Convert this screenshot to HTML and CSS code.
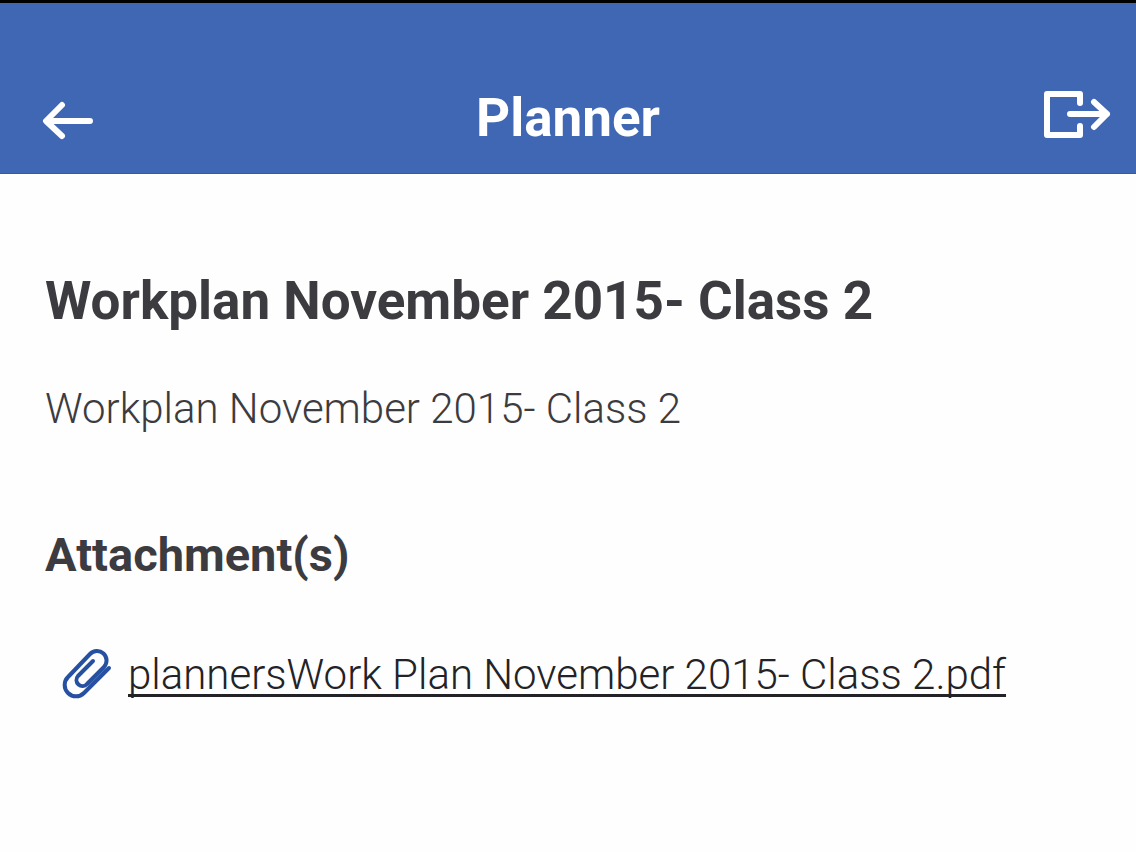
FILE: index.html
```
<!DOCTYPE html>
<html lang="en">
<head>
    <meta charset="UTF-8">
    <meta name="viewport" content="width=device-width, initial-scale=1.0">
    <title>Planner</title>
    <link rel="stylesheet" href="styles.css">
</head>
<body>
    <header class="topbar">
        <button type="button" class="icon-button back" aria-label="Back">
            <svg width="52" height="48" viewBox="0 0 52 48">
                <path d="M48 27H5M20 11L4 27L20 42"/>
            </svg>
        </button>
        <h1>Planner</h1>
        <button type="button" class="icon-button" aria-label="Log out">
            <svg width="68" height="56" viewBox="0 0 68 56">
                <path d="M37 13V4H4V45H37V36M27 24H64M51 12L64 24L51 37"/>
            </svg>
        </button>
    </header>
    <main>
        <h2>Workplan November 2015- Class 2</h2>
        <p>Workplan November 2015- Class 2</p>
        <h3>Attachment(s)</h3>
        <div class="attachment">
            <svg width="50" height="54" viewBox="0 0 50 54">
                <path d="M47 20L22 45A11 11 0 0 1 6 29L28 6A9.5 9.5 0 0 1 42 19L25 36A6 6 0 0 1 16 28L31 13"/>
            </svg>
            <a href="#">plannersWork Plan November 2015- Class 2.pdf</a>
        </div>
    </main>
</body>
</html>
```

FILE: styles.css
```
body {
    font-family: Roboto, sans-serif;
    margin: 0;
    background-color: #fefefe;
    color: #3c3b3f;
}
.topbar {
    display: grid;
    grid-template-columns: 1fr auto 1fr;
    align-items: center;
    padding: 83px 25px 23px;
    background-color: #3f67b4;
    color: white;
    border-top: 3px solid #000;
    border-bottom: 1px solid #365a9f;
}
.topbar h1 {
    margin: 0;
    font-size: 53px;
    line-height: 64px;
    font-weight: 700;
}
.icon-button {
    display: flex;
    justify-self: end;
    padding: 0;
    background: none;
    border: none;
    color: white;
    cursor: pointer;
}
.back {
    justify-self: start;
    padding-left: 17px;
}
svg {
    flex: none;
    fill: none;
    stroke: currentColor;
    stroke-width: 6px;
    stroke-linecap: round;
    stroke-linejoin: round;
}
main {
    padding: 95px 45px;
}
h2 {
    margin: 0 0 46px;
    font-size: 53px;
    line-height: 64px;
    font-weight: 700;
}
p {
    margin: 0 0 86px;
    font-size: 42px;
    line-height: 60px;
    font-weight: 300;
}
h3 {
    margin: 0 0 60px;
    font-size: 47px;
    line-height: 60px;
    font-weight: 700;
}
.attachment {
    display: flex;
    align-items: center;
    gap: 16px;
    padding-left: 17px;
}
.attachment svg {
    color: #2750a0;
    stroke-width: 4px;
}
.attachment a {
    color: #232226;
    font-size: 42px;
    line-height: 60px;
    font-weight: 300;
    text-decoration-thickness: 3px;
    text-underline-offset: 5px;
    text-decoration-skip-ink: none;
}
```
